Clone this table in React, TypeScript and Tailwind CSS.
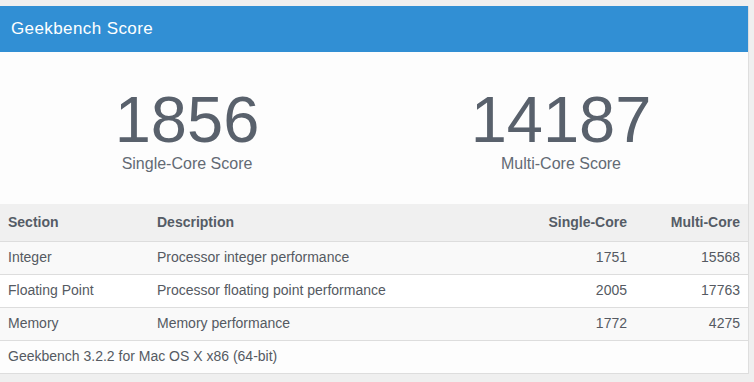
const rows = [
  { section: 'Integer', description: 'Processor integer performance', single: '1751', multi: '15568' },
  { section: 'Floating Point', description: 'Processor floating point performance', single: '2005', multi: '17763' },
  { section: 'Memory', description: 'Memory performance', single: '1772', multi: '4275' },
]

function Score({ value, label }: { value: string; label: string }) {
  return (
    <div className="flex flex-col items-center pt-[35px]">
      <div className="text-[65px] font-light leading-none text-[#59616c]">{value}</div>
      <div className="mt-[2px] text-[16px] leading-5 text-[#636a74]">{label}</div>
    </div>
  )
}

export default function App() {
  return (
    <div
      className="h-[382px] w-[754px] overflow-hidden bg-[#efefef] pt-[6px]"
      style={{ fontFamily: '"Liberation Sans", Arial, sans-serif' }}
    >
      <div className="w-[749px] border-r border-[#dedede] bg-white">
        <div className="flex h-[46px] items-center bg-[#318fd4] pl-[11px]">
          <h2 className="text-[17px] tracking-[0.4px] text-white">Geekbench Score</h2>
        </div>

        <div className="grid h-[152px] grid-cols-2 bg-[#fdfdfd]">
          <Score value="1856" label="Single-Core Score" />
          <Score value="14187" label="Multi-Core Score" />
        </div>

        <table className="w-full border-collapse text-[14px] text-[#555a62]">
          <thead>
            <tr className="h-[37px] border-b border-[#dddddd] bg-[#f0f0f0] font-bold text-[#555c66]">
              <th className="w-[157px] pl-2 text-left">Section</th>
              <th className="text-left">Description</th>
              <th className="w-[120px] text-right">Single-Core</th>
              <th className="w-[121px] pr-2 text-right">Multi-Core</th>
            </tr>
          </thead>
          <tbody>
            {rows.map((r, i) => (
              <tr
                key={r.section}
                className={`h-[33px] border-b border-[#dddddd] ${i % 2 === 0 ? 'bg-[#f9f9f9]' : 'bg-white'}`}
              >
                <td className="pl-2">{r.section}</td>
                <td>{r.description}</td>
                <td className="text-right">{r.single}</td>
                <td className="pr-2 text-right">{r.multi}</td>
              </tr>
            ))}
            <tr className="h-[33px] border-b border-[#dddddd] bg-[#fdfdfd]">
              <td colSpan={4} className="pl-2">
                Geekbench 3.2.2 for Mac OS X x86 (64-bit)
              </td>
            </tr>
          </tbody>
        </table>
      </div>
    </div>
  )
}
